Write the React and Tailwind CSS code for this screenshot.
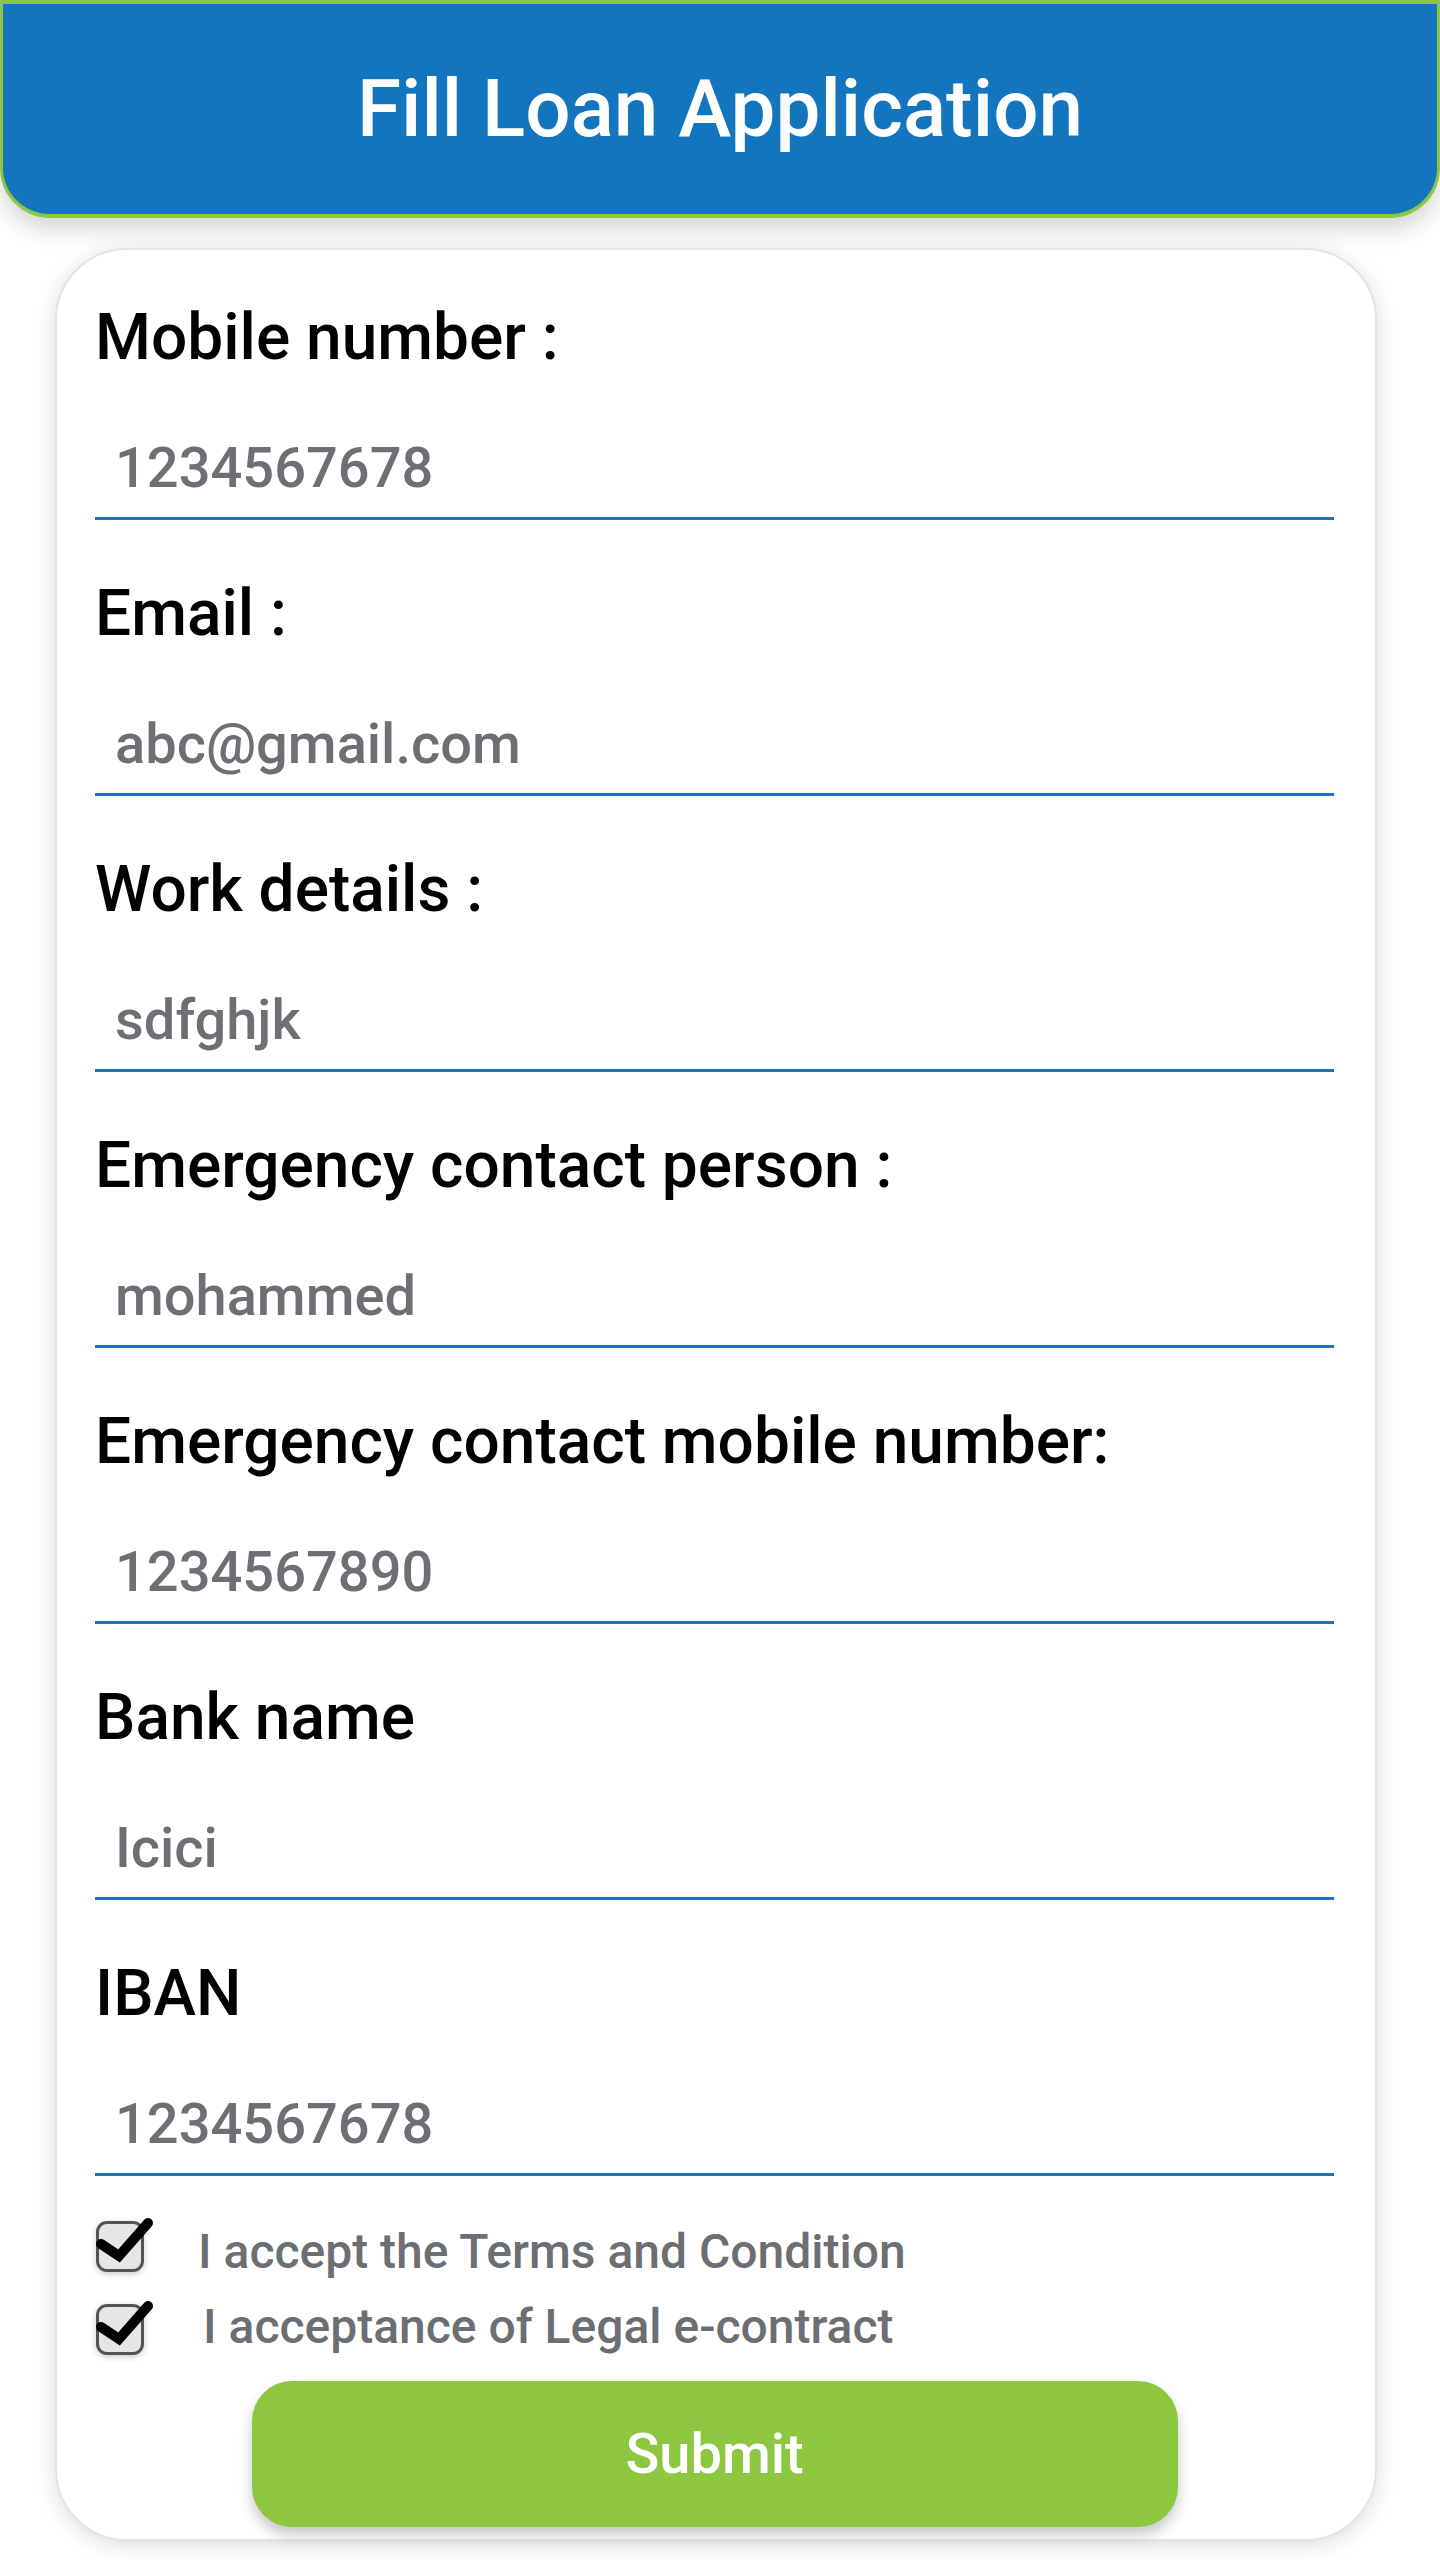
import React from 'react';

const fields = [
  { label: 'Mobile number :', value: '1234567678' },
  { label: 'Email :', value: 'abc@gmail.com' },
  { label: 'Work details :', value: 'sdfghjk' },
  { label: 'Emergency contact person :', value: 'mohammed' },
  { label: 'Emergency contact mobile number:', value: '1234567890' },
  { label: 'Bank name', value: 'Icici' },
  { label: 'IBAN', value: '1234567678' },
];

function CheckBox() {
  return (
    <div className="relative w-[48px] h-[51px] shrink-0">
      <div className="absolute inset-0 rounded-[11px] border-[3px] border-[#545454] bg-[#e6e6e6] shadow-[0_2px_6px_rgba(0,0,0,0.2)]" />
      <svg className="absolute left-0 top-0 overflow-visible" width="48" height="51" viewBox="0 0 48 51">
        <polyline points="5,23 23,35 52,2" fill="none" stroke="#000" strokeWidth="10" strokeLinecap="round" strokeLinejoin="miter" />
      </svg>
    </div>
  );
}

export default function App() {
  return (
    <div className="min-h-[2560px] bg-white font-['Roboto',sans-serif] overflow-hidden">
      {/* HEADER */}
      <div className="relative z-10 h-[218px] bg-[#1275bd] border-t-4 border-b-4 border-x-[3px] border-[#8dc63f] rounded-b-[50px] shadow-[0_12px_22px_rgba(0,0,0,0.16)] flex items-center justify-center">
        <h1 className="text-white text-[80px] font-medium leading-none">Fill Loan Application</h1>
      </div>

      {/* FORM CARD */}
      <div className="ml-[55px] mt-[30px] w-[1322px] h-[2293px] bg-white border-2 border-[#e4e4e4] rounded-[72px] shadow-[0_4px_22px_rgba(0,0,0,0.14)] pl-[38px] pr-[41px] pt-[56px] flex flex-col">
        {fields.map((f, i) => (
          <div key={i} className={i > 0 ? 'mt-[62px]' : ''}>
            <div className="text-[64px] leading-none font-medium text-black">{f.label}</div>
            <div className="mt-[71px] pl-[20px] pb-[21px] border-b-[3px] border-[#1a73be] text-[56px] leading-[55px] font-medium text-[#6c6f74]">
              {f.value}
            </div>
          </div>
        ))}

        <div className="mt-[45px] ml-[1px] flex items-start h-[50px]">
          <CheckBox />
          <span className="ml-[54px] mt-[7px] text-[48px] leading-none font-medium text-[#6b6e73]">I accept the Terms and Condition</span>
        </div>
        <div className="mt-[33px] ml-[1px] flex items-start h-[51px]">
          <CheckBox />
          <span className="ml-[59px] mt-[-1px] text-[48px] leading-none font-medium text-[#6b6e73]">I acceptance of Legal e-contract</span>
        </div>

        <button className="mt-[26px] mx-auto w-[926px] h-[146px] shrink-0 rounded-[40px] bg-[#8dc63f] text-white text-[56px] font-medium shadow-[0_8px_14px_rgba(0,0,0,0.22)]">
          Submit
        </button>
      </div>
    </div>
  );
}
